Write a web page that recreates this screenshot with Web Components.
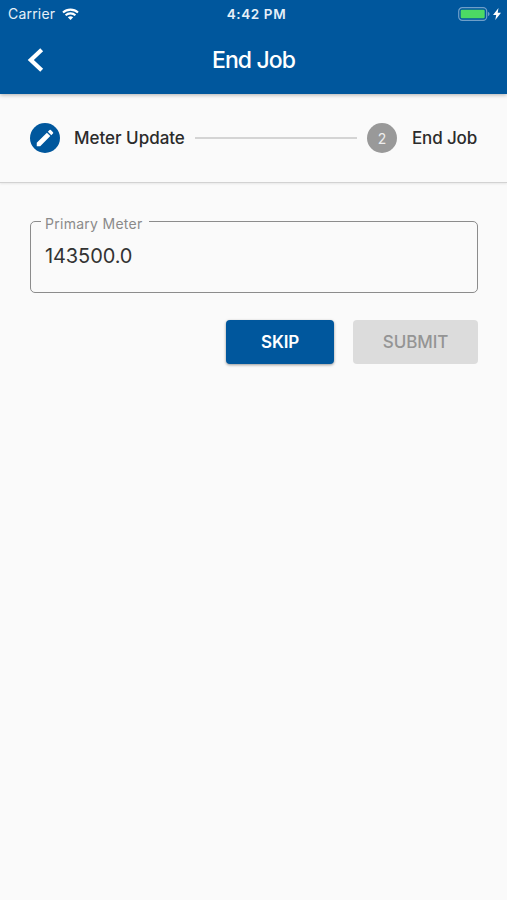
<!DOCTYPE html>
<html lang="en">
<head>
<meta charset="utf-8">
<title>End Job</title>
<style>
html, body { margin: 0; height: 100%; background: #fafafa; }
body { font-family: Inter, "Liberation Sans", sans-serif; color: #2b2b2b; overflow: hidden; }
</style>
</head>
<body>
<job-screen></job-screen>
<script>
const define = (name, html) => customElements.define(name, class extends HTMLElement {
  constructor() {
    super();
    this.attachShadow({ mode: 'open' }).innerHTML = html;
  }
});

define('status-bar', `
<style>
:host { display: grid; grid-template-columns: 1fr auto 1fr; align-items: center; height: 27px; padding: 0 6px 0 8px; color: #e6f0f8; font-size: 14px; line-height: 26px; }
.left { display: flex; align-items: center; gap: 7px; letter-spacing: .2px; }
.time { font-size: 13.500px; font-weight: 600; letter-spacing: .6px; margin-left: 4px; }
.right { display: flex; align-items: center; justify-content: flex-end; gap: 3px; }
svg { display: block; }
</style>
<div class="left"><span>Carrier</span>
<svg width="17" height="12" viewBox="0 0 17 12" fill="none" stroke="#fff" stroke-width="2.1"><path d="M1 4.5C5.2.6 11.8.6 16 4.5M3.6 7.2c2.8-2.5 7-2.5 9.8 0"/><path fill="#fff" stroke="none" d="M8.5 12 5.8 9.3c1.5-1.4 3.9-1.4 5.4 0z"/></svg></div>
<span class="time">4:42 PM</span>
<div class="right">
<svg width="32" height="14" viewBox="0 0 32 14"><rect x=".7" y=".7" width="28" height="12.6" rx="3.6" fill="none" stroke="#6e9fc9" stroke-width="1.2"/><rect x="2.7" y="2.7" width="24" height="8.6" rx="1.2" fill="#4cd964"/><path d="M30 5v4c2-.6 2-3.400 0-4z" fill="#6e9fc9"/></svg>
<svg width="8" height="12" viewBox="0 0 8 12"><path d="M5.500 0 0 7h3.200L2.300 12 8 4.800H4.700z" fill="#fff"/></svg>
</div>`);

define('nav-bar', `
<style>
:host { display: grid; grid-template-columns: 1fr auto 1fr; align-items: center; height: 67px; color: #fff; }
svg { display: block; margin-left: 27px; }
.t { font-size: 23px; font-weight: 500; letter-spacing: -.9px; line-height: 30px; }
</style>
<svg width="17" height="24" viewBox="0 0 17 24" fill="none" stroke="#fff" stroke-width="4.2"><path d="M14.700 1.800 3.800 12l10.900 10.200"/></svg>
<span class="t"><slot></slot></span>`);

define('app-header', `
<style>
:host { display: block; position: relative; z-index: 1; background: #00579d; height: 94px; box-shadow: 0 1px 4px rgba(0,0,0,.3); }
nav-bar { margin-top: -1px; }
</style>
<status-bar></status-bar><nav-bar><slot></slot></nav-bar>`);

define('step-item', `
<style>
:host { display: flex; align-items: center; gap: 15px; font-size: 17px; font-weight: 500; white-space: nowrap; }
.dot { width: 30px; height: 30px; border-radius: 50%; display: grid; place-items: center; background: var(--dot, #999); color: #eee; font-size: 14px; font-weight: 400; }
</style>
<span class="dot"><slot name="icon"></slot></span><span><slot></slot></span>`);

define('job-stepper', `
<style>
:host { display: flex; align-items: center; height: 88px; padding: 0 30px; border-bottom: 1px solid #d2d2d2; box-shadow: 0 1px 2px rgba(0,0,0,.08); }
.line { flex: 1; height: 2px; background: #d4d4d4; margin: 0 10px; }
.a { --dot: #00579d; gap: 14px; letter-spacing: -.02px; }
.b { letter-spacing: -.15px; }
svg { display: block; }
</style>
<step-item class="a"><svg slot="icon" width="22" height="22" viewBox="0 0 24 24" fill="#fff"><path d="M3 17.250V21h3.750L17.810 9.940l-3.750-3.750L3 17.250zM20.710 7.040a1 1 0 0 0 0-1.410l-2.340-2.340a1 1 0 0 0-1.410 0l-1.830 1.830 3.750 3.750 1.830-1.830z"/></svg>Meter Update</step-item>
<span class="line"></span>
<step-item class="b"><span slot="icon">2</span>End Job</step-item>`);

define('outlined-field', `
<style>
:host { display: block; }
fieldset { box-sizing: border-box; margin: 0; height: 83px; padding: 0 14px; border: 1px solid #8c8c8c; border-radius: 5px; min-width: 0; }
legend { margin-left: -4px; padding: 5px 6px 0 4px; font-size: 14px; line-height: 18px; letter-spacing: .28px; color: #8a8a8a; }
.v { font-size: 20px; line-height: 28px; margin-top: 9px; letter-spacing: -.1px; color: #333; }
</style>
<fieldset><legend><slot name="label"></slot></legend><div class="v"><slot></slot></div></fieldset>`);

define('action-button', `
<style>
:host { display: grid; place-items: center; box-sizing: border-box; height: 44px; border-radius: 4px; font-size: 17px; font-weight: 500; letter-spacing: -.1px; background: #dcdcdc; color: #949494; }
:host([primary]) { background: #00579d; color: #fff; font-weight: 600; letter-spacing: -.2px; box-shadow: 0 1px 3px rgba(0,0,0,.4); }
</style><span><slot></slot></span>`);

define('job-screen', `
<style>
:host { display: block; width: 507px; height: 900px; background: #fafafa; }
outlined-field { margin: 27px 29.500px 0 30px; }
.actions { display: flex; justify-content: flex-end; gap: 19px; padding: 27px 29px 0 0; }
.skip { width: 108px; } .submit { width: 125px; }
</style>
<app-header>End Job</app-header>
<job-stepper></job-stepper>
<outlined-field><span slot="label">Primary Meter</span>143500.0</outlined-field>
<div class="actions"><action-button primary class="skip">SKIP</action-button><action-button class="submit">SUBMIT</action-button></div>`);
</script>
</body>
</html>
